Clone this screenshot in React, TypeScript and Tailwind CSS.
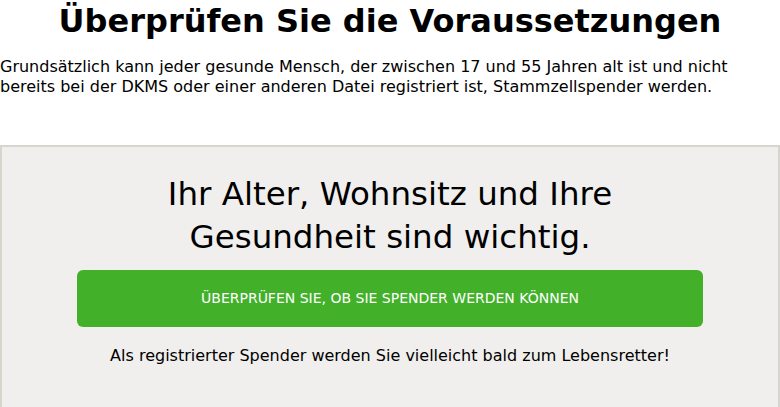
export default function App() {
  return (
    <div className="w-[780px] h-[407px] overflow-hidden bg-white text-black" style={{ fontFamily: '"DejaVu Sans", Verdana, sans-serif' }}>
      <h1 className="text-center text-[32px] font-bold leading-[40px] pt-[1px]">Überprüfen Sie die Voraussetzungen</h1>
      <p className="mt-[16px] text-[16px] leading-[20px]">
        Grundsätzlich kann jeder gesunde Mensch, der zwischen 17 und 55 Jahren alt ist und nicht bereits bei der DKMS oder einer anderen Datei registriert ist, Stammzellspender werden.
      </p>
      <div className="mt-[48px] border-2 border-[#d6d5ce] bg-[#f0efed] h-[300px] flex flex-col items-center">
        <h2 className="mt-[26px] text-center text-[32.5px] leading-[43px] font-normal w-[540px]">
          Ihr Alter, Wohnsitz und Ihre Gesundheit sind wichtig.
        </h2>
        <a className="mt-[11px] w-[626px] h-[57px] rounded-[6px] bg-[#43b02a] text-white text-[14px] flex items-center justify-center uppercase">
          Überprüfen Sie, ob Sie Spender werden können
        </a>
        <p className="mt-[19px] text-[16px] leading-[20px]">Als registrierter Spender werden Sie vielleicht bald zum Lebensretter!</p>
      </div>
    </div>
  );
}
